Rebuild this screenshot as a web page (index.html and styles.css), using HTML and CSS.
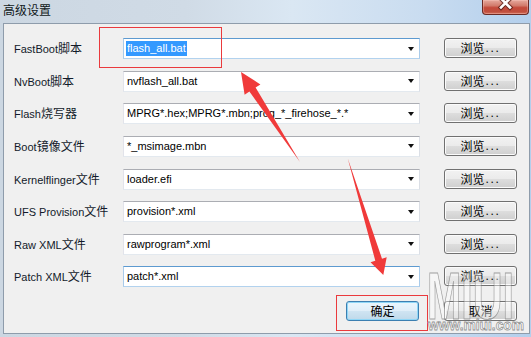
FILE: index.html
```html
<!DOCTYPE html>
<html lang="zh-CN">
<head>
<meta charset="utf-8">
<title>高级设置</title>
<link rel="stylesheet" href="styles.css">
</head>
<body>
<div class="window">
  <div class="titlebar">
    <span class="title">高级设置</span>
    <div class="close">
      <svg width="47" height="15" viewBox="0 0 47 15">
        <path d="M19 -0.5 L28 8.5 M28 -0.5 L19 8.5" class="x-shadow"/>
        <path d="M19 -0.5 L28 8.5 M28 -0.5 L19 8.5" class="x-glyph"/>
      </svg>
    </div>
  </div>
  <div class="client">
    <div class="form">
      <label class="lbl">FastBoot<span class="zh">脚本</span></label>
      <div class="combo hot"><span class="val sel">flash_all.bat</span><i class="caret"></i></div>
      <button class="btn browse">浏览<span class="dots">...</span></button>

      <label class="lbl">NvBoot<span class="zh">脚本</span></label>
      <div class="combo"><span class="val">nvflash_all.bat</span><i class="caret"></i></div>
      <button class="btn browse">浏览<span class="dots">...</span></button>

      <label class="lbl">Flash<span class="zh">烧写器</span></label>
      <div class="combo"><span class="val">MPRG*.hex;MPRG*.mbn;prog_*_firehose_*.*</span><i class="caret"></i></div>
      <button class="btn browse">浏览<span class="dots">...</span></button>

      <label class="lbl">Boot<span class="zh">镜像文件</span></label>
      <div class="combo"><span class="val">*_msimage.mbn</span><i class="caret"></i></div>
      <button class="btn browse">浏览<span class="dots">...</span></button>

      <label class="lbl">Kernelflinger<span class="zh">文件</span></label>
      <div class="combo"><span class="val">loader.efi</span><i class="caret"></i></div>
      <button class="btn browse">浏览<span class="dots">...</span></button>

      <label class="lbl">UFS Provision<span class="zh">文件</span></label>
      <div class="combo"><span class="val">provision*.xml</span><i class="caret"></i></div>
      <button class="btn browse">浏览<span class="dots">...</span></button>

      <label class="lbl">Raw XML<span class="zh">文件</span></label>
      <div class="combo"><span class="val">rawprogram*.xml</span><i class="caret"></i></div>
      <button class="btn browse">浏览<span class="dots">...</span></button>

      <label class="lbl">Patch XML<span class="zh">文件</span></label>
      <div class="combo hot"><span class="val">patch*.xml</span><i class="caret"></i></div>
      <button class="btn browse">浏览<span class="dots">...</span></button>
    </div>
    <div class="actions">
      <button class="btn default">确定</button>
      <button class="btn">取消</button>
    </div>
  </div>

  <div class="mark mark-top"></div>
  <div class="mark mark-ok"></div>

  <svg class="overlay" width="531" height="337" viewBox="0 0 531 337">
    <polygon class="arrow" points="241,72 260.4,84.4 255.6,87.6 300,162 249.4,91.6 244.6,94.8"/>
    <polygon class="arrow" points="383.3,275 386.7,257.2 382,258.7 347.7,158.3 375.3,260.7 370.5,262.2"/>
    <text class="wm-big" x="427" y="319" textLength="87" lengthAdjust="spacingAndGlyphs">MIUI</text>
    <text class="wm-small" x="428" y="330" textLength="96" lengthAdjust="spacingAndGlyphs">www.miui.com</text>
  </svg>
</div>
</body>
</html>
```

FILE: styles.css
```css
* { box-sizing: border-box; }

html, body {
  margin: 0;
  padding: 0;
  background: #c8d8e9;
}

.window {
  position: relative;
  width: 531px;
  height: 337px;
  overflow: hidden;
  background: linear-gradient(90deg, #ccd7e2 0%, #d0dbe6 35%, #dae7f3 55%, #c9dcf0 80%, #b3cfec 100%);
  font-family: "Liberation Sans", "Noto Sans CJK SC", sans-serif;
  color: #111;
}

/* title bar */
.titlebar {
  display: flex;
  height: 23px;
}

.title {
  padding: 3px 0 0 3px;
  font-family: "Noto Sans CJK SC", sans-serif;
  font-size: 12px;
  line-height: 14px;
  color: #101820;
}

.close {
  margin-left: auto;
  margin-right: 2px;
  width: 47px;
  height: 15px;
  border: 1px solid #6b2a24;
  border-top: none;
  border-radius: 0 0 4px 4px;
  background: linear-gradient(180deg, #e6a99d 0%, #d27b6c 40%, #c4493a 55%, #c0503f 85%, #d7745f 100%);
  box-shadow: inset 0 0 0 1px rgba(255, 210, 200, 0.35);
  overflow: hidden;
}

.close svg { display: block; margin: -1px 0 0 -1px; }

.x-shadow { stroke: #5a1f18; stroke-width: 4.6; stroke-linecap: square; fill: none; opacity: 0.8; }
.x-glyph  { stroke: #ffffff; stroke-width: 2.6; stroke-linecap: square; fill: none; }

/* client area */
.client {
  margin-left: 3px;
  width: 527px;
  height: 311px;
  border: 1px solid #8e9cab;
  background: #f0f0f0;
}

.form {
  display: grid;
  grid-template-columns: 109px 297px auto;
  grid-auto-rows: 21px;
  row-gap: 11.65px;
  padding: 14px 0 0 10px;
  align-items: center;
}

.lbl {
  font-size: 11px;
  line-height: 14px;
  color: #121a2a;
  white-space: nowrap;
}

.zh {
  font-family: "Noto Sans CJK SC", sans-serif;
  font-size: 12px;
}

.combo {
  display: flex;
  align-items: center;
  height: 21px;
  padding-left: 2px;
  padding-right: 5px;
  background: #fff;
  border: 1px solid;
  border-color: #abadb3 #dbdfe6 #e3e9ef #e2e3ea;
}

.combo.hot {
  border-color: #5d9ad0 #a9cbea #b2d2ee #a9cbea;
}

.val {
  flex: 1;
  padding: 0 1px;
  font-size: 11px;
  line-height: 15px;
  color: #000;
  white-space: nowrap;
  overflow: hidden;
}

.val.sel {
  flex: none;
  background: #3399ff;
  color: #fff;
  margin-right: auto;
}

.caret {
  width: 0;
  height: 0;
  border-left: 3.5px solid transparent;
  border-right: 3.5px solid transparent;
  border-top: 4px solid #111;
}

/* buttons */
.btn {
  width: 73px;
  height: 20px;
  padding: 0;
  border: 1px solid #707070;
  border-radius: 3px;
  background: linear-gradient(180deg, #f2f2f2 0%, #ebebeb 48%, #dddddd 52%, #cfcfcf 100%);
  box-shadow: inset 0 0 0 1px #fbfbfb;
  font-family: "Noto Sans CJK SC", sans-serif;
  font-size: 12px;
  line-height: 16px;
  color: #000;
  display: flex;
  align-items: center;
  justify-content: center;
}

.browse {
  margin-left: 24px;
  align-self: start;
}

.dots {
  font-family: "Liberation Sans", sans-serif;
  letter-spacing: 1.6px;
  margin-left: 1px;
}

.btn.default {
  border-color: #3c7fb1;
  box-shadow: inset 0 0 0 1px #8fd6f6;
  background: linear-gradient(180deg, #eaf6fd 0%, #e0eef8 48%, #cfe4f2 52%, #bfd9ea 100%);
}

.actions {
  display: flex;
  justify-content: flex-end;
  gap: 25px;
  margin-top: 14px;
  padding-right: 12px;
}

/* annotation overlays */
.mark {
  position: absolute;
  border: 1px solid #ea3a3d;
}

.mark-top {
  left: 99px;
  top: 27px;
  width: 123px;
  height: 41px;
}

.mark-ok {
  left: 336px;
  top: 295px;
  width: 92px;
  height: 36px;
}

.overlay {
  position: absolute;
  left: 0;
  top: 0;
  pointer-events: none;
}

.arrow {
  fill: #f03a3a;
}

.wm-big {
  font-family: "Liberation Sans", sans-serif;
  font-weight: bold;
  font-size: 66px;
  fill: rgba(255, 255, 255, 0.4);
  stroke: rgba(105, 105, 105, 0.6);
  stroke-width: 1;
}

.wm-small {
  font-family: "Liberation Sans", sans-serif;
  font-weight: bold;
  font-size: 15px;
  fill: rgba(255, 255, 255, 0.95);
  stroke: rgba(120, 120, 120, 0.8);
  stroke-width: 0.8;
}
```
